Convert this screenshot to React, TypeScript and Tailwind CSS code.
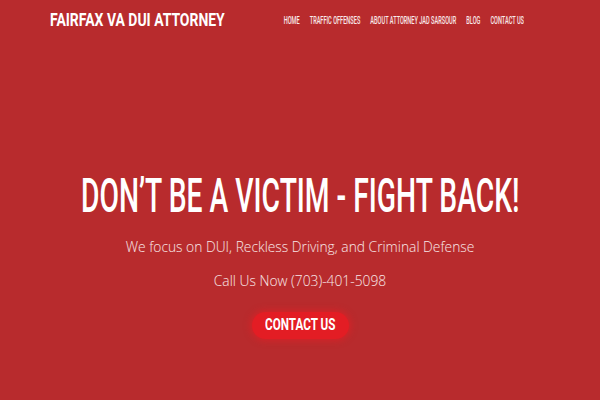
const nav = [
  "HOME",
  "TRAFFIC OFFENSES",
  "ABOUT ATTORNEY JAD SARSOUR",
  "BLOG",
  "CONTACT US",
];

const cond = "font-['Roboto',sans-serif] whitespace-nowrap";

export default function App() {
  return (
    <div className="flex h-[400px] w-[600px] flex-col overflow-hidden bg-[#b82b2d] text-white">
      <header className="grid h-[44px] grid-cols-[175px_minmax(0,1fr)] pl-[50px] pr-[76px]">
        <div
          className={`mt-[11px] origin-left scale-x-[0.775] text-[18px] font-bold leading-none ${cond}`}
        >
          FAIRFAX VA DUI ATTORNEY
        </div>
        <div className="flex min-w-0 justify-end">
          <nav
            className={`mt-[16px] flex shrink-0 origin-right scale-x-[0.56] gap-[18px] text-[10px] font-medium leading-none text-white/90 ${cond}`}
          >
            {nav.map((item) => (
              <span key={item}>{item}</span>
            ))}
          </nav>
        </div>
      </header>

      <main className="flex flex-col items-center pt-[128px] text-center">
        <h1
          className={`h-[48px] scale-x-[0.589] text-[48px] font-medium leading-none ${cond}`}
        >
          DON’T BE A VICTIM - FIGHT BACK!
        </h1>
        <p className="mt-[20px] font-['Open_Sans',sans-serif] text-[13.8px] font-light leading-none text-white/90">
          We focus on DUI, Reckless Driving, and Criminal Defense
        </p>
        <p className="mt-[20px] font-['Open_Sans',sans-serif] text-[13.8px] font-light leading-none text-white/90">
          Call Us Now (703)-401-5098
        </p>
        <button className="mt-[24px] flex h-[27px] w-[97px] items-center justify-center rounded-full bg-[#e31d24] shadow-[0_0_6px_2px_rgba(235,30,36,0.55)]">
          <span
            className={`inline-block scale-x-[0.73] text-[16px] font-bold leading-none text-white ${cond}`}
          >
            CONTACT US
          </span>
        </button>
      </main>
    </div>
  );
}
